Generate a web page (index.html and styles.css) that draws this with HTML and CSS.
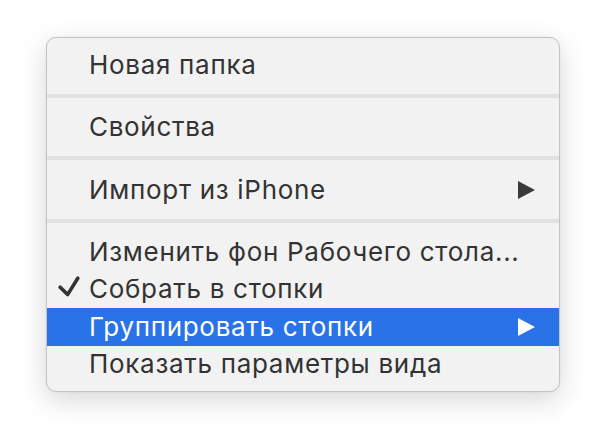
FILE: index.html
```html
<!DOCTYPE html>
<html lang="ru">
<head>
<meta charset="utf-8">
<link rel="stylesheet" href="styles.css">
</head>
<body>
<div class="stage">
  <div class="menu">
    <div class="item"><span class="label">Новая папка</span></div>
    <div class="sep"></div>
    <div class="item"><span class="label">Свойства</span></div>
    <div class="sep"></div>
    <div class="item"><span class="label">Импорт из iPhone</span><span class="arrow"></span></div>
    <div class="sep"></div>
    <div class="item"><span class="label">Изменить фон Рабочего стола...</span></div>
    <div class="item"><svg class="check" width="22" height="21" viewBox="0 0 22 21"><path d="M2.2 11.2 L9.6 18.6 L19.8 2.2" fill="none" stroke="#333333" stroke-width="3.6" stroke-linecap="round" stroke-linejoin="round"/></svg><span class="label">Собрать в стопки</span></div>
    <div class="item active"><span class="label">Группировать стопки</span><span class="arrow"></span></div>
    <div class="item"><span class="label">Показать параметры вида</span></div>
  </div>
</div>
</body>
</html>
```
FILE: styles.css
```css
html, body {
  margin: 0;
  padding: 0;
  background: #ffffff;
}
.stage {
  width: 606px;
  height: 446px;
  padding: 37px 0 0 46px;
  box-sizing: border-box;
}
.menu {
  width: 514px;
  height: 355px;
  box-sizing: border-box;
  background: #f2f2f2;
  border: 1px solid #c4c4c4;
  border-radius: 10px;
  padding: 8px 0 8px 0;
  box-shadow: 0 8px 28px rgba(0,0,0,0.16), 0 0 2px rgba(0,0,0,0.08);
  font-family: Inter, "Liberation Sans", Arial, sans-serif;
  font-size: 26px;
  letter-spacing: 0.7px;
  color: #333333;
  display: flex;
  flex-direction: column;
}
.item {
  height: 37.5px;
  display: flex;
  align-items: center;
  position: relative;
  padding-left: 42px;
  padding-right: 24px;
}
.item.active {
  background: #2a72e8;
  color: #ffffff;
}
.label {
  flex: 1;
  line-height: 1;
}
.check {
  position: absolute;
  left: 11px;
  top: 5px;
}
.arrow {
  width: 0;
  height: 0;
  border-top: 9.5px solid transparent;
  border-bottom: 9.5px solid transparent;
  border-left: 17px solid #3a3a3a;
}
.active .arrow {
  border-left-color: #ffffff;
}
.sep {
  height: 4px;
  background: #e1e1e1;
  margin: 10.5px 0;
}
```
